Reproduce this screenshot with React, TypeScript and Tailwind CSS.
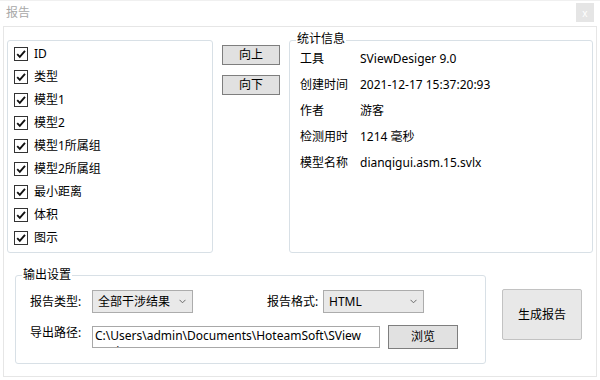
import React from "react";

const font = { fontFamily: '"Noto Sans", "Noto Sans CJK SC", sans-serif' };

function Check({ label }: { label: string }) {
  return (
    <div className="flex h-[23px] items-center">
      <div className="flex h-[14px] w-[14px] items-center justify-center border border-[#333333] bg-white">
        <svg width="12" height="12" viewBox="0 0 12 12">
          <path d="M2.2 6.2 L4.8 8.8 L10 2.8" fill="none" stroke="#111" strokeWidth="1.9" />
        </svg>
      </div>
      <span className="ml-[6px] text-[12px] leading-none text-black">{label}</span>
    </div>
  );
}

function Chevron() {
  return (
    <svg width="7" height="5" viewBox="0 0 7 5">
      <path d="M0.5 0.8 L3.5 3.8 L6.5 0.8" fill="none" stroke="#6a6a6a" strokeWidth="1" />
    </svg>
  );
}

function Row({ k, v }: { k: string; v: string }) {
  return (
    <div className="flex h-[26px] items-center text-[12px] text-black">
      <span className="w-[60px]">{k}</span>
      <span>{v}</span>
    </div>
  );
}

export default function App() {
  const items = ["ID", "类型", "模型1", "模型2", "模型1所属组", "模型2所属组", "最小距离", "体积", "图示"];
  return (
    <div className="flex h-[380px] w-[600px] flex-col bg-white" style={font}>
      <div className="flex h-[26px] items-start justify-between border-t border-[#f0f0f0]">
        <span className="pl-[6px] pt-[5px] text-[12px] leading-[14px] text-[#a8a8a8]">报告</span>
        <div className="mr-[6px] mt-[2px] flex h-[19px] w-[18px] items-center justify-center bg-[#e5e5e5] text-[10px] leading-none text-white">
          x
        </div>
      </div>
      <div className="mx-[3px] flex h-[351px] flex-col border border-[#e6e6e6]">
        <div className="flex pl-[3px] pt-[13px]">
          <div className="h-[213px] w-[206px] rounded-[3px] border border-[#d8e0e6] pl-[6px] pt-[1px]">
            {items.map((it) => (
              <Check key={it} label={it} />
            ))}
          </div>
          <div className="ml-[9px] flex flex-col gap-[10px] pt-[5px]">
            <div className="flex h-[20px] w-[58px] items-center justify-center border border-[#7e7e7e] bg-[#e1e1e1] text-[12px] text-black">
              向上
            </div>
            <div className="flex h-[20px] w-[58px] items-center justify-center border border-[#7e7e7e] bg-[#e1e1e1] text-[12px] text-black">
              向下
            </div>
          </div>
          <div className="relative ml-[9px] h-[213px] w-[304px] rounded-[3px] border border-[#d8e0e6] pl-[10px] pt-[5px]">
            <span className="absolute left-[6px] top-[-9px] bg-white px-[1px] text-[12px] leading-[14px] text-black">
              统计信息
            </span>
            <Row k="工具" v="SViewDesiger 9.0" />
            <Row k="创建时间" v="2021-12-17 15:37:20:93" />
            <Row k="作者" v="游客" />
            <Row k="检测用时" v="1214 毫秒" />
            <Row k="模型名称" v="dianqigui.asm.15.svlx" />
          </div>
        </div>
        <div className="flex items-start pl-[11px] pt-[22px]">
          <div className="relative h-[89px] w-[471px] rounded-[3px] border border-[#d8e0e6] pl-[14px] pt-[14px]">
            <span className="absolute left-[6px] top-[-8px] bg-white px-[1px] text-[12px] leading-[14px] text-black">
              输出设置
            </span>
            <div className="flex h-[23px] items-center text-[12px] text-black">
              <span className="w-[62px]">报告类型:</span>
              <div className="flex h-[23px] w-[101px] items-center justify-between border border-[#acacac] bg-[#e9e9e9] pl-[5px] pr-[6px]">
                <span>全部干涉结果</span>
                <Chevron />
              </div>
              <span className="ml-[74px] w-[56px]">报告格式:</span>
              <div className="flex h-[23px] w-[101px] items-center justify-between border border-[#acacac] bg-[#e9e9e9] pl-[5px] pr-[6px]">
                <span>HTML</span>
                <Chevron />
              </div>
            </div>
            <div className="mt-[12px] flex items-start text-[12px] text-black">
              <span className="w-[62px] pt-[1px] leading-[14px]">导出路径:</span>
              <div className="mt-[1px] h-[22px] w-[288px] overflow-hidden border border-[#a8a8a8] bg-white pl-[2px] leading-[16px]">
                <div className="whitespace-nowrap pt-[1px]">C:\Users\admin\Documents\HoteamSoft\SView</div>
                <div className="whitespace-nowrap">Desiger\Reports</div>
              </div>
              <div className="ml-[8px] flex h-[24px] w-[70px] items-center justify-center border border-[#7e7e7e] bg-[#e1e1e1]">
                浏览
              </div>
            </div>
          </div>
          <div className="ml-[16px] mt-[14px] flex h-[51px] w-[80px] items-center justify-center rounded-[2px] border border-[#c2c2c2] bg-[#e8e8e8] text-[12px] text-black">
            生成报告
          </div>
        </div>
      </div>
    </div>
  );
}
